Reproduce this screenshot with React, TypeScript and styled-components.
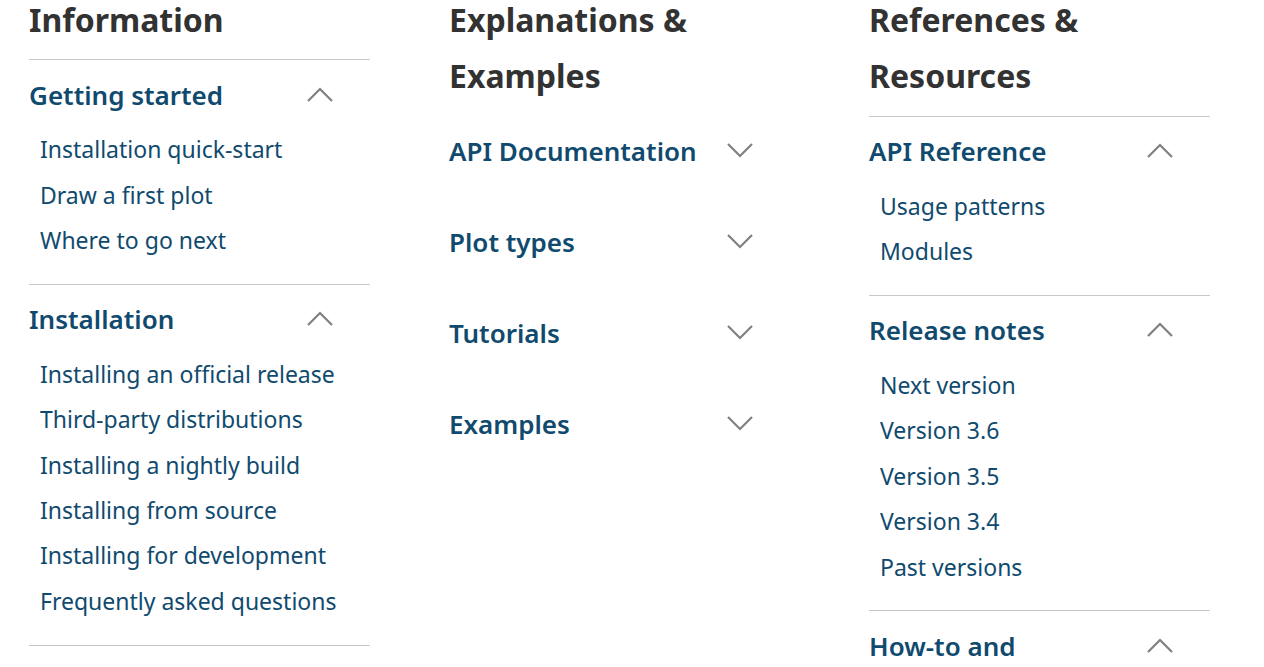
import React from "react";
import styled, { createGlobalStyle } from "styled-components";

const Global = createGlobalStyle`
  html, body { margin: 0; padding: 0; background: #ffffff; }
  body { font-family: "Noto Sans", "Open Sans", sans-serif; overflow: hidden; }
`;

const Page = styled.div`
  display: grid;
  grid-template-columns: repeat(3, 341px);
  column-gap: 79px;
  padding-left: 29px;
  align-items: start;
`;

const Column = styled.div`
  display: flex;
  flex-direction: column;
`;

const Heading = styled.h2`
  margin: -8.5px 0 11px;
  font-size: 32px;
  font-weight: 700;
  line-height: 56.5px;
  color: #323232;
`;

const Section = styled.section<{ $bordered: boolean; $open: boolean }>`
  border-top: 1px solid ${(p) => (p.$bordered ? "#c8c8c8" : "transparent")};
  padding-bottom: ${(p) => (p.$open ? "19.5px" : "22px")};

  &:last-child {
    border-bottom: 1px solid ${(p) => (p.$bordered ? "#c8c8c8" : "transparent")};
  }
`;

const Summary = styled.div`
  height: 68px;
  display: flex;
  align-items: center;
  justify-content: space-between;
  padding-right: 37px;
`;

const Title = styled.span`
  font-size: 26px;
  font-weight: 600;
  color: #104a6e;
  padding-top: 1px;
`;

const List = styled.ul`
  list-style: none;
  margin: 0;
  padding: 0 0 0 11px;
`;

const Item = styled.li`
  height: 45.4px;
  display: flex;
  align-items: center;
  font-size: 23px;
  color: #104a6e;
  padding-bottom: 3px;
  box-sizing: border-box;
`;

const Chevron = ({ up }: { up: boolean }) => (
  <svg width="26" height="15" viewBox="0 0 26 15" fill="none">
    <polyline
      points={up ? "1,14 13,2 25,14" : "1,1 13,13 25,1"}
      stroke="#808080"
      strokeWidth="2.2"
      fill="none"
    />
  </svg>
);

type Sec = { title: string; open: boolean; items?: string[] };
type Col = { heading: string[]; bordered: boolean; sections: Sec[] };

const columns: Col[] = [
  {
    heading: ["Information"],
    bordered: true,
    sections: [
      {
        title: "Getting started",
        open: true,
        items: ["Installation quick-start", "Draw a first plot", "Where to go next"],
      },
      {
        title: "Installation",
        open: true,
        items: [
          "Installing an official release",
          "Third-party distributions",
          "Installing a nightly build",
          "Installing from source",
          "Installing for development",
          "Frequently asked questions",
        ],
      },
    ],
  },
  {
    heading: ["Explanations &", "Examples"],
    bordered: false,
    sections: [
      { title: "API Documentation", open: false },
      { title: "Plot types", open: false },
      { title: "Tutorials", open: false },
      { title: "Examples", open: false },
    ],
  },
  {
    heading: ["References &", "Resources"],
    bordered: true,
    sections: [
      { title: "API Reference", open: true, items: ["Usage patterns", "Modules"] },
      {
        title: "Release notes",
        open: true,
        items: ["Next version", "Version 3.6", "Version 3.5", "Version 3.4", "Past versions"],
      },
      { title: "How-to and", open: true },
    ],
  },
];

export default function App() {
  return (
    <>
      <Global />
      <Page>
        {columns.map((c) => (
          <Column key={c.heading[0]}>
            <Heading>
              {c.heading.map((h, i) => (
                <React.Fragment key={h}>
                  {i > 0 && <br />}
                  {h}
                </React.Fragment>
              ))}
            </Heading>
            {c.sections.map((s) => (
              <Section key={s.title} $bordered={c.bordered} $open={s.open}>
                <Summary>
                  <Title>{s.title}</Title>
                  <Chevron up={s.open} />
                </Summary>
                {s.items && (
                  <List>
                    {s.items.map((it) => (
                      <Item key={it}>{it}</Item>
                    ))}
                  </List>
                )}
              </Section>
            ))}
          </Column>
        ))}
      </Page>
    </>
  );
}
